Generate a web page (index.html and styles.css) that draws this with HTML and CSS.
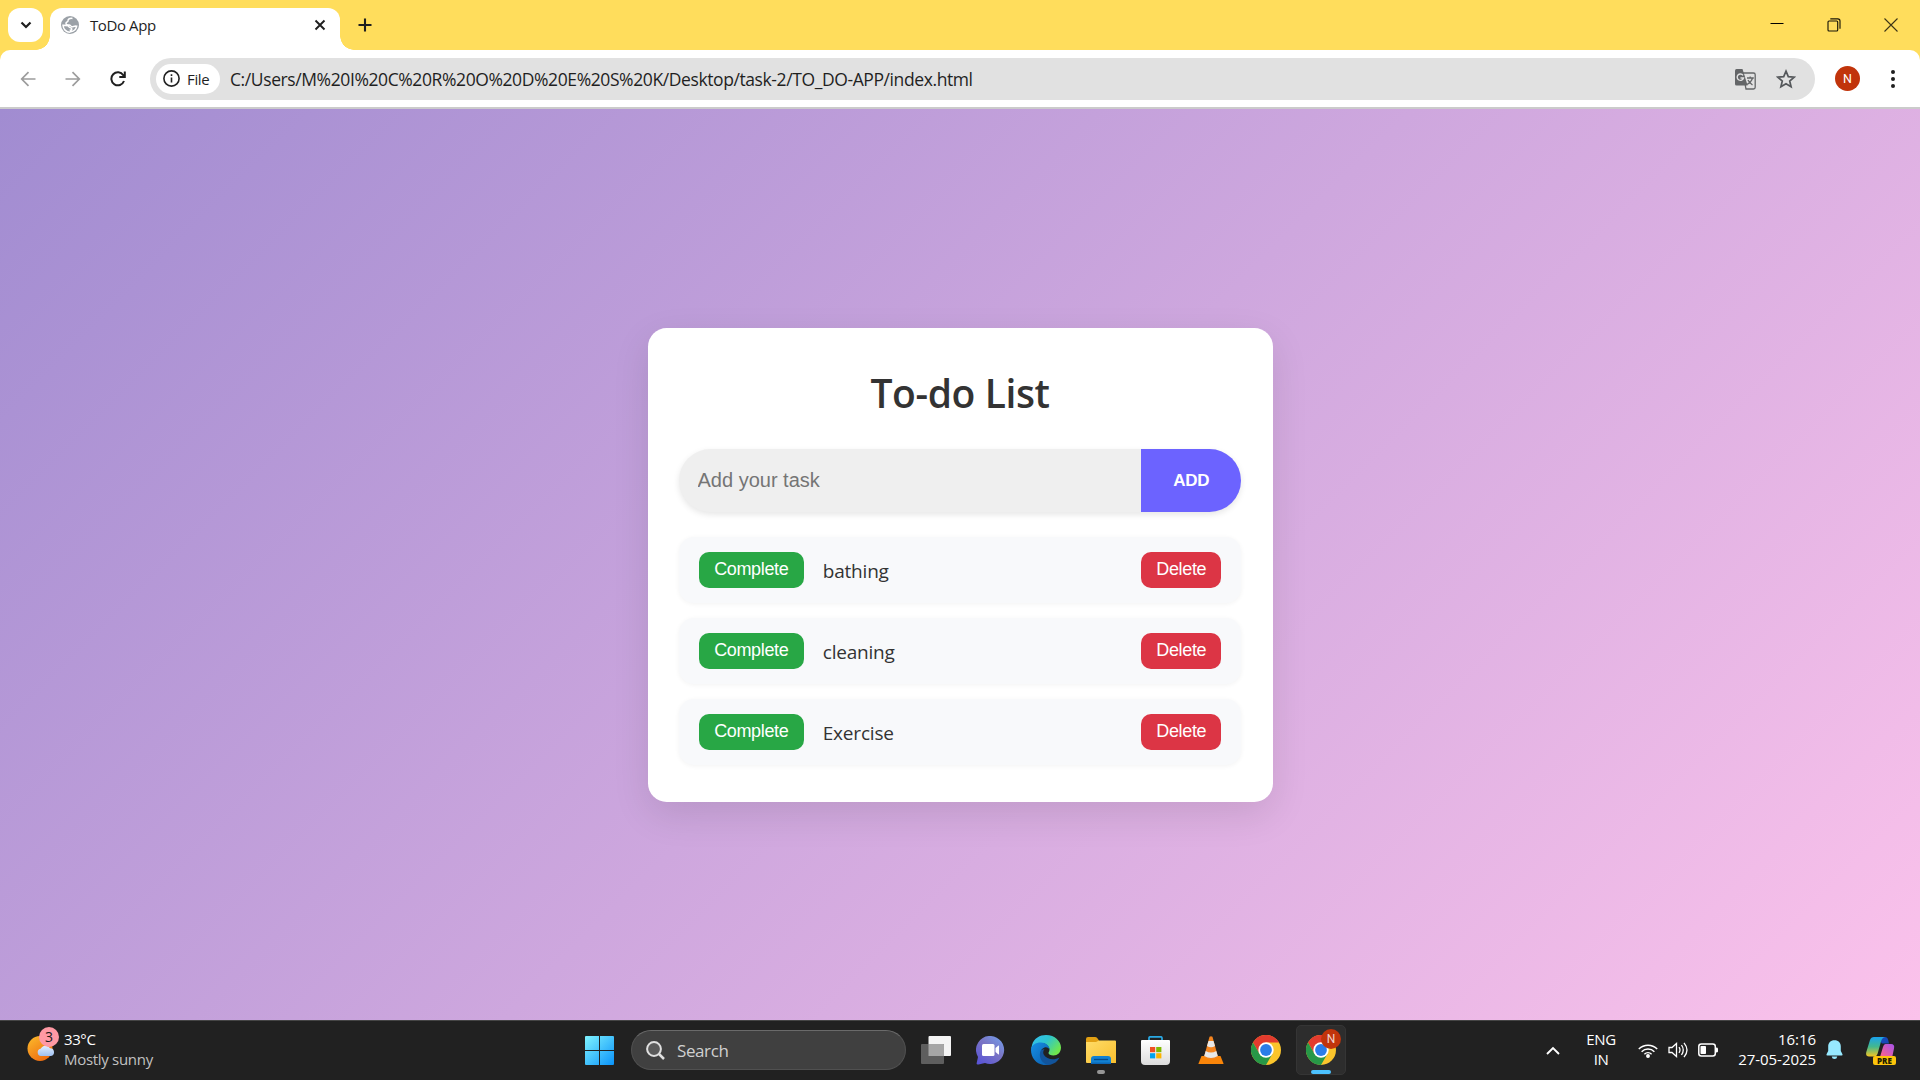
FILE: index.html
```html
<!DOCTYPE html>
<html lang="en">
<head>
<meta charset="utf-8">
<title>ToDo App</title>
<link rel="stylesheet" href="styles.css">
</head>
<body>
<svg class="defs" width="0" height="0">
  <defs>
    <linearGradient id="win" x1="0" y1="0" x2="1" y2="1"><stop offset="0" stop-color="#7ff3ff"/><stop offset="1" stop-color="#0a93fa"/></linearGradient>
    <linearGradient id="sun" x1="0" y1="0" x2=".7" y2="1"><stop offset="0" stop-color="#fcbd2c"/><stop offset="1" stop-color="#ee6a10"/></linearGradient>
    <linearGradient id="cloud" x1="0" y1="0" x2="0" y2="1"><stop offset="0" stop-color="#e2efff"/><stop offset="1" stop-color="#9fc0f2"/></linearGradient>
    <linearGradient id="chat" x1="1" y1="0" x2=".2" y2="1"><stop offset="0" stop-color="#73a2ef"/><stop offset=".5" stop-color="#7a74c4"/><stop offset="1" stop-color="#5a55d6"/></linearGradient>
    <linearGradient id="edgeTop" x1="0" y1="0" x2="1" y2=".6"><stop offset="0" stop-color="#36c0f5"/><stop offset=".5" stop-color="#2dc4cf"/><stop offset="1" stop-color="#6fe64d"/></linearGradient>
    <linearGradient id="edgeLow" x1="0" y1="0" x2="1" y2="1"><stop offset="0" stop-color="#1690e6"/><stop offset="1" stop-color="#0b5cab"/></linearGradient>
    <linearGradient id="folder" x1="0" y1="0" x2="1" y2="1"><stop offset="0" stop-color="#ffdc68"/><stop offset="1" stop-color="#f9bf2e"/></linearGradient>
    <linearGradient id="store" x1="0" y1="0" x2="0" y2="1"><stop offset="0" stop-color="#ffffff"/><stop offset="1" stop-color="#dcdcdc"/></linearGradient>
    <linearGradient id="pilotL" x1="0" y1="0" x2="0" y2="1"><stop offset="0" stop-color="#1aa3ee"/><stop offset=".5" stop-color="#43b88d"/><stop offset="1" stop-color="#f4c622"/></linearGradient>
    <linearGradient id="pilotR" x1="1" y1="0" x2="0" y2="1"><stop offset="0" stop-color="#a553ed"/><stop offset=".6" stop-color="#f0609a"/><stop offset="1" stop-color="#ff8d4f"/></linearGradient>
    <symbol id="chrome" viewBox="0 0 30 30">
      <circle cx="15" cy="15" r="15" fill="#fbc52c"/>
      <path d="M2 7.5A15 15 0 0 1 28 7.5H15L8.5 18.7Z" fill="#e33b2e"/>
      <path d="M2 7.5A15 15 0 0 0 15 30L21.5 18.7L8.5 18.7Z" fill="#279847"/>
      <circle cx="15" cy="15" r="7.7" fill="#fff"/>
      <circle cx="15" cy="15" r="5.9" fill="#2b7de9"/>
    </symbol>
  </defs>
</svg>

<header class="tabstrip">
  <button class="tab-search"><svg width="12" height="12" viewBox="0 0 12 12"><path d="M1.500 3.500 6 8l4.500-4.500" fill="none" stroke="#1f1f1f" stroke-width="2.200"/></svg></button>
  <div class="tab">
    <svg width="18" height="18" viewBox="0 0 18 18"><circle cx="9" cy="9" r="9" fill="#9ba1a7"/><path d="M11.500 2.500C9 2 6.800 3 7 4.800c.2 1.200-1.800 1-2 2.400-.2 1.600 1.600 1.800 3.200 1.800 1.500 0 1.500 1.700 2.800 1.700 1.500 0 2.700-.9 4.700-.5-.6 3-3 5.200-6 5.600l-.3-1.600c1.300 0 1.800-.8 1-1.900-.6-.9-2-.5-2.500-1.600C7.300 9.500 5 9.500 2 9.300c.2 3.700 3 6.900 7 6.900" fill="none" stroke="#fff" stroke-width="1.500"/></svg>
    <span class="tab-title">ToDo App</span>
    <svg width="12" height="12" viewBox="0 0 12 12"><path d="m1.500 1.500 9 9m0-9-9 9" stroke="#1f1f1f" stroke-width="1.900"/></svg>
  </div>
  <button class="new-tab"><svg width="14" height="14" viewBox="0 0 14 14"><path d="M7 .5v13M.5 7h13" stroke="#1f1f1f" stroke-width="2.100"/></svg></button>
  <div class="window-controls">
    <svg width="14" height="14" viewBox="0 0 14 14"><path d="M.5 5.500h13" stroke="#000"/></svg>
    <svg width="14" height="14" viewBox="0 0 14 14" fill="none" stroke="#1a1708" stroke-width="1.150"><rect x="1" y="3" width="9.700" height="10" rx="1"/><path d="M3.300.8h7.500q2.200 0 2.200 2.200v7.800"/></svg>
    <svg width="14" height="14" viewBox="0 0 14 14"><path d="m.5.5 13 13m0-13-13 13" stroke="#3d3516" stroke-width="1.100"/></svg>
  </div>
</header>

<nav class="toolbar">
  <div class="nav-buttons">
    <svg width="16" height="16" viewBox="0 0 16 16" fill="none" stroke="#9c9c9c" stroke-width="1.700"><path d="M15.500 8H2M8.500 1.200 1.700 8l6.800 6.800"/></svg>
    <svg width="16" height="16" viewBox="0 0 16 16" fill="none" stroke="#9c9c9c" stroke-width="1.700"><path d="M.5 8H14M7.500 1.200 14.300 8l-6.800 6.800"/></svg>
    <svg width="16" height="16" viewBox="0 0 16 16" fill="none" stroke="#1f1f1f" stroke-width="2"><path d="M14 10A6.500 6.500 0 1 1 13.300 4.200L14.500 5.800M14.800 .5V6H9.300"/></svg>
  </div>
  <div class="address">
    <div class="chip">
      <svg width="17" height="17" viewBox="0 0 17 17"><circle cx="8.500" cy="8.500" r="7.600" fill="none" stroke="#222" stroke-width="1.600"/><path d="M8.500 7.500v5M8.500 4.200v1.700" stroke="#222" stroke-width="1.600"/></svg>
      <span>File</span>
    </div>
    <span class="url">C:/Users/M%20I%20C%20R%20O%20D%20E%20S%20K/Desktop/task-2/TO_DO-APP/index.html</span>
    <svg class="translate" width="21" height="21" viewBox="0 0 21 21"><path d="M8 4h10.500q1.700 0 1.700 1.700v12.600q0 1.700-1.700 1.700H11Z" fill="none" stroke="#636567" stroke-width="1.300"/><path d="M1.500 0H7.500L12.600 16.500H1.500Q0 16.500 0 15V1.500Q0 0 1.500 0Z" fill="#636567"/><path d="M12 9h6.800M15.200 7.500V9M17.500 9q-1 4-5.500 6.500M13 11q1.500 3 4.500 5" fill="none" stroke="#636567" stroke-width="1.300"/><path d="M8 6.300A3.200 3.200 0 1 0 8.500 9H5.500" fill="none" stroke="#e1e1e1" stroke-width="1.400"/></svg>
    <svg width="20" height="20" viewBox="0 0 20 20"><path d="m10 2.200 2.300 5.400 5.900.5-4.500 3.900 1.400 5.700L10 14.700l-5.100 3 1.400-5.700L1.800 8.100l5.900-.5Z" fill="none" stroke="#55585b" stroke-width="1.700"/></svg>
  </div>
  <span class="avatar">N</span>
  <svg width="6" height="20" viewBox="0 0 6 20" fill="#1f1f1f"><circle cx="3" cy="3" r="2"/><circle cx="3" cy="10" r="2"/><circle cx="3" cy="17" r="2"/></svg>
</nav>

<main class="page">
  <section class="card">
    <h1>To-do List</h1>
    <div class="entry">
      <input type="text" placeholder="Add your task">
      <button class="add">ADD</button>
    </div>
    <ul class="tasks">
      <li><button class="complete">Complete</button><span>bathing</span><button class="delete">Delete</button></li>
      <li><button class="complete">Complete</button><span>cleaning</span><button class="delete">Delete</button></li>
      <li><button class="complete">Complete</button><span>Exercise</span><button class="delete">Delete</button></li>
    </ul>
  </section>
</main>

<footer class="taskbar">
  <div class="weather">
    <div class="weather-icon">
      <svg width="28" height="26" viewBox="0 0 28 26"><circle cx="13" cy="12.500" r="12.500" fill="url(#sun)"/><path d="M14 20a3.700 3.700 0 0 1-.4-7.300A5.500 5.500 0 0 1 23 12.300 3.900 3.900 0 0 1 24 20Z" fill="url(#cloud)"/></svg>
      <span class="count">3</span>
    </div>
    <div class="weather-text"><span>33°C</span><span class="muted">Mostly sunny</span></div>
  </div>
  <div class="apps">
    <div class="app start"><svg width="29" height="29" viewBox="0 0 29 29" fill="url(#win)"><path d="M1 0H14V14H0V1Q0 0 1 0ZM15 0H28Q29 0 29 1V14H15ZM0 15H14V29H1Q0 29 0 28ZM15 15H29V28Q29 29 28 29H15Z"/></svg></div>
    <div class="search"><svg width="19" height="19" viewBox="0 0 19 19" fill="none" stroke="#e0e0e0" stroke-width="2"><circle cx="8" cy="8" r="6.900" fill="#5b5b5b"/><path d="m13 13 5 5" stroke-width="2.500"/></svg><span>Search</span></div>
    <div class="app"><svg width="30" height="28" viewBox="0 0 30 28"><rect x="7.500" width="22.500" height="20" rx="1" fill="#f4f4f4"/><rect y="8" width="23" height="20" rx="1" fill="#5e5e5e"/><path d="M7.500 8H22q1 0 1 1v11H7.500Z" fill="#a6a6a6"/></svg></div>
    <div class="app"><svg width="29" height="29" viewBox="0 0 29 29"><path d="M15 0A14 14 0 1 1 9 27L2.500 28.500Q0 29 .8 26.500L2 21A14 14 0 0 1 15 0Z" fill="url(#chat)"/><rect x="6" y="8" width="12.500" height="12" rx="1.500" fill="#fff"/><path d="m19.500 12 3-2.500q.5-.3.500.5v8q0 .8-.5.500L19.500 16Z" fill="#fff"/></svg></div>
    <div class="app"><svg width="30" height="30" viewBox="0 0 30 30"><path d="M1 10C3 3 9 0 15 0c9 0 15 6.500 15 12.500 0 5-3.500 8-7.500 8-3 0-5-1.200-5-2.500 0-1 1-1.500 1-3.500 0-3-3.500-6.500-8-6.500C5 8 1 12 0 15Z" fill="url(#edgeTop)"/><path d="M0 15C0 10 4.500 7.500 10 7.500c4.500 0 8.500 3 8.500 7 0 0-2-3-5-2-4 1.300-4 5-3.300 7.500C12 26 18 30 18 30 7 31.500 0 24 0 15Z" fill="url(#edgeLow)"/><path d="M10 15c-3 6 0 13.500 7.500 15C23 29.500 27 26 28.500 22.500c-6 3.500-13 1.500-15.500-2.500-1.200-2-1-4 .5-6Z" fill="#12549b"/></svg></div>
    <div class="app"><svg width="30" height="27" viewBox="0 0 30 27"><path d="M0 2Q0 0 2 0H9q1.500 0 2.200 1L13 3.500V10H0Z" fill="#e2a013"/><path d="M0 5H10L13 3.500H29q1 0 1 1V26H1q-1 0-1-1Z" fill="url(#folder)"/><path d="M5 27V22q0-3 3-3H22q3 0 3 3v5Z" fill="#1281d2"/><path d="M5 27h20v-1.500H5Z" fill="#0b66b5"/><path d="M8 22.500H22" stroke="#064b8a" stroke-width="1.300"/></svg><i class="running"></i></div>
    <div class="app"><svg width="29" height="29" viewBox="0 0 29 29"><path d="M8 5V2q0-1.200 1.200-1.200H19.800q1.200 0 1.200 1.200V5" fill="none" stroke="#29a9e4" stroke-width="1.700"/><path d="M1 4H28q1 0 1 1V25q0 4-4 4H4q-4 0-4-4V5Q0 4 1 4Z" fill="url(#store)"/><path d="M9 11h5.200v5.200H9Z" fill="#ef5023"/><path d="M15.200 11h5.200v5.200h-5.200Z" fill="#80b900"/><path d="M9 17.200h5.200v5.200H9Z" fill="#00a3ee"/><path d="M15.200 17.200h5.200v5.200h-5.200Z" fill="#fcb400"/></svg></div>
    <div class="app"><svg width="26" height="28" viewBox="0 0 26 28"><path d="M3.500 20H22.500L25.500 27.500Q25.500 28 25 28H1Q.3 28 .5 27.500Z" fill="#f98509"/><path d="M11.500.8Q13-.5 14.500.8L20 21Q13 26 6 21Z" fill="#f5851f"/><path d="M10.500 5H15.500L17 10Q13 12.500 9 10ZM7.700 15Q13 18 18.300 15L19.800 20Q13 24 6.200 20Z" fill="#e8e8e8"/></svg></div>
    <div class="app"><svg width="30" height="30"><use href="#chrome"/></svg></div>
    <div class="app active"><svg width="30" height="30"><use href="#chrome"/></svg><span class="profile">N</span><i class="running"></i></div>
  </div>
  <div class="tray">
    <svg class="chevron" width="14" height="9" viewBox="0 0 14 9"><path d="m1 8 6-6 6 6" fill="none" stroke="#fff" stroke-width="1.900"/></svg>
    <div class="language"><span>ENG</span><span>IN</span></div>
    <svg class="wifi" width="20" height="15" viewBox="0 0 20 15" fill="none" stroke="#fff" stroke-width="1.500"><path d="M.8 6a13 13 0 0 1 18.400 0M3.600 8.700a9.200 9.200 0 0 1 12.800 0M6.400 11.300a5.200 5.200 0 0 1 7.200 0"/><circle cx="10" cy="13" r="1.200" fill="#fff"/></svg>
    <svg class="volume" width="21" height="18" viewBox="0 0 21 18" fill="none" stroke="#fff" stroke-width="1.300"><path d="M1 6.500h3L8.500 2.500v13L4 11.500H1Z"/><path d="M11 6.200q2 2.800 0 5.600M13.500 4q3.500 5 0 10M16 1.800q6 7.200 0 14.400"/></svg>
    <svg class="battery" width="21" height="14" viewBox="0 0 21 14"><rect x=".8" y="1" width="16.500" height="12" rx="2.500" fill="none" stroke="#fff" stroke-width="1.500"/><rect x="2.500" y="3" width="5.500" height="8" rx=".8" fill="#fff"/><path d="M18 4.500q2 0 2 1v3q0 1-2 1Z" fill="#fff"/></svg>
    <div class="clock"><span>16:16</span><span>27-05-2025</span></div>
    <svg class="bell" width="17" height="20" viewBox="0 0 17 20"><path d="M8.500.3c4 0 6.300 2.700 6.300 6.300v4.300l1.700 3.300q.3 1.200-.8 1.200H1.300q-1.100 0-.8-1.200l1.700-3.300V6.600C2.200 3 4.500.3 8.500.3ZM5.700 16.500h5.600q-.4 2.500-2.800 2.500t-2.800-2.500Z" fill="#97e9ff"/></svg>
    <div class="copilot">
      <svg width="29" height="26" viewBox="0 0 29 26"><path d="M11 0H19q2.500 0 3.200 3L23 6.500H16Z" fill="#1749b8"/><path d="M8 0H19q-3 .5-4 4.500L11.500 17q-.8 2.500-3.500 2.500H3Q-.7 19.500.3 15L4 3Q5 0 8 0Z" fill="url(#pilotL)"/><path d="M19.500 7H25q4 0 3 4.500L26 21q-1 3-4 3H9q4-.5 5-4l3-10q.8-3 2.500-3Z" fill="url(#pilotR)"/></svg>
      <span>PRE</span>
    </div>
  </div>
</footer>
</body>
</html>
```
FILE: styles.css
```css
* { box-sizing: border-box; }
body {
  margin: 0; width: 1920px; height: 1080px; overflow: hidden;
  display: flex; flex-direction: column; background: #ffdd5c;
  font-family: "Open Sans", "Noto Sans", sans-serif; color: #1f1f1f;
}
svg { display: block; flex: none; }
.defs { position: absolute; }
button { border: 0; padding: 0; }

/* Tab strip */
.tabstrip { height: 50px; flex: none; display: flex; align-items: flex-start; padding: 8px 14px 0 8px; }
.tab-search { width: 35px; height: 34px; border-radius: 12px; background: #fff; display: grid; place-items: center; }
.tab {
  position: relative; width: 290px; height: 42px; margin-left: 7px; padding: 0 14px 8px 11px;
  display: flex; align-items: center; background: #fff; border-radius: 12px 12px 0 0;
}
.tab::before, .tab::after { content: ""; position: absolute; bottom: 0; width: 14px; height: 14px; }
.tab::before { left: -14px; background: radial-gradient(circle at 0 0, transparent 13.500px, #fff 14px); }
.tab::after { right: -14px; background: radial-gradient(circle at 100% 0, transparent 13.500px, #fff 14px); }
.tab-title { flex: 1; margin-left: 11px; font-size: 15px; letter-spacing: -.4px; }
.new-tab { width: 14px; height: 34px; margin-left: 18px; background: none; display: grid; place-items: center; }
.window-controls { margin-left: auto; height: 33px; margin-right: 8px; display: flex; align-items: center; gap: 43px; }

/* Toolbar */
.toolbar {
  height: 59px; flex: none; display: flex; align-items: center; padding: 0 24px 0 20px;
  background: #fff; border-radius: 10px 10px 0 0; border-bottom: 2px solid #cbcbcb;
}
.nav-buttons { display: flex; gap: 29px; width: 130px; flex: none; }
.address {
  width: 1665px; flex: none; height: 42px; border-radius: 21px; background: #e1e1e1;
  display: flex; align-items: center; padding: 0 19px 0 6px;
}
.chip {
  width: 64px; height: 30px; border-radius: 15px; background: #fff; padding-left: 7px;
  display: flex; align-items: center; gap: 7px; font-size: 15px; font-weight: 500; letter-spacing: -.35px;
}
.url { flex: 1; margin-left: 10px; padding-top: 1px; font-size: 17.500px; letter-spacing: -.4px; white-space: nowrap; }
.translate { margin: 2px 20px 0 0; }
.avatar {
  width: 25px; height: 25px; flex: none; margin: 0 29.500px 0 20px; border-radius: 50%; background: #c1340b;
  color: #fff; font: 12.500px/25px Roboto, sans-serif; text-align: center;
}

/* Page content */
.page {
  flex: 1; display: flex; align-items: flex-start; justify-content: center; padding-top: 219px;
  background: linear-gradient(135deg, #a18cd1, #fbc2eb);
}
.card {
  width: 625px; height: 474px; padding: 36px 31.250px 0; border-radius: 18.750px; background: #fff;
  box-shadow: 0 12.500px 37.500px rgba(0, 0, 0, .1);
}
h1 { margin: 0 0 28px; font-size: 39px; line-height: 57px; font-weight: 600; color: #333; text-align: center; letter-spacing: -.4px; }
.entry { display: flex; height: 63px; border-radius: 37.500px; overflow: hidden; background: #efefef; box-shadow: 0 2.500px 6.250px rgba(0, 0, 0, .1); }
.entry input {
  flex: 1; border: 0; outline: 0; background: none; padding: 0 18.750px;
  font: 20px "Liberation Sans", Arial, sans-serif;
}
.entry input::placeholder { color: #757575; }
.add { width: 100px; background: #6c63ff; color: #fff; font: bold 17px "Liberation Sans", Arial, sans-serif; letter-spacing: -.3px; }
.tasks { list-style: none; margin: 25px 0 0; padding: 0; display: flex; flex-direction: column; gap: 15px; }
.tasks li {
  height: 66px; padding: 0 20px; border-radius: 15px; background: #f8f9fb;
  display: flex; align-items: center; box-shadow: 0 1px 5px rgba(0, 0, 0, .05);
}
.tasks span { flex: 1; margin-left: 19px; padding-top: 1px; font-size: 19px; color: #333; letter-spacing: -.2px; }
.tasks button {
  height: 36px; padding-bottom: 2px; border-radius: 10px; color: #fff;
  font: 18px "Liberation Sans", Arial, sans-serif; letter-spacing: -.35px;
}
.tasks .complete { width: 105px; background: #28a745; }
.tasks .delete { width: 80px; background: #dc3545; }

/* Taskbar */
.taskbar {
  height: 60px; flex: none; display: grid; grid-template-columns: 571px 1fr 390px;
  align-items: center; background: #212121; border-top: 1px solid #454545; color: #fff;
}
.weather { display: flex; padding: 0 0 1px 27px; gap: 9px; }
.weather-icon { position: relative; width: 28px; padding-top: 7px; }
.count {
  position: absolute; left: 12px; top: -2px; width: 20px; height: 20px; border-radius: 50%;
  background: #ff99a4; color: #1a1a1a; font-size: 14px; line-height: 20px; text-align: center;
}
.weather-text, .language, .clock { display: flex; flex-direction: column; margin-bottom: 2px; font-size: 15px; line-height: 20px; letter-spacing: -.4px; }
.weather-text .muted { color: #c2c2c2; letter-spacing: -.3px; }
.apps { display: flex; align-items: center; margin-bottom: 1px; }
.app { position: relative; width: 55px; height: 50px; display: grid; place-items: center; }
.start { padding-left: 2px; }
.search {
  width: 275px; height: 40px; margin: 0 2px 0 5px; padding-left: 14px; border-radius: 20px;
  background: #404040; border: 1px solid #505050; border-top-color: #6a6a6a;
  display: flex; align-items: center; gap: 12px; color: #d0d0d0; font-size: 17px; letter-spacing: -.4px;
}
.running { position: absolute; bottom: 1px; left: 23.500px; width: 8px; height: 4px; border-radius: 2px; background: #969696; }
.active::before { content: ""; position: absolute; inset: 0 2.500px; border-radius: 5px; background: #2d2d2d; border: 1px solid #353535; }
.active > svg { position: relative; }
.active .running { left: 17.500px; width: 20px; background: #4cc2ff; }
.profile {
  position: absolute; left: 28px; top: 4px; width: 20px; height: 20px; border-radius: 50%;
  background: #c1340b; color: #f3d5cc; font: 12px/20px Roboto, sans-serif; text-align: center;
}
.tray { display: flex; align-items: center; padding: 0 0 1px 16px; }
.language { width: 40px; margin-left: 21px; align-items: center; margin-right: 17px; }
.volume { margin-left: 10px; }
.battery { margin-left: 9px; }
.clock { width: 97px; align-items: flex-end; letter-spacing: -.05px; }
.bell { margin-left: 10px; }
.copilot { position: relative; margin-left: 23px; padding-bottom: 1px; }
.copilot span {
  position: absolute; left: 7px; top: 19px; width: 23px; height: 9px; border-radius: 2px;
  background: #fdc40b; color: #231c00; font-size: 8px; line-height: 9px; font-weight: 800; text-align: center;
}
```
